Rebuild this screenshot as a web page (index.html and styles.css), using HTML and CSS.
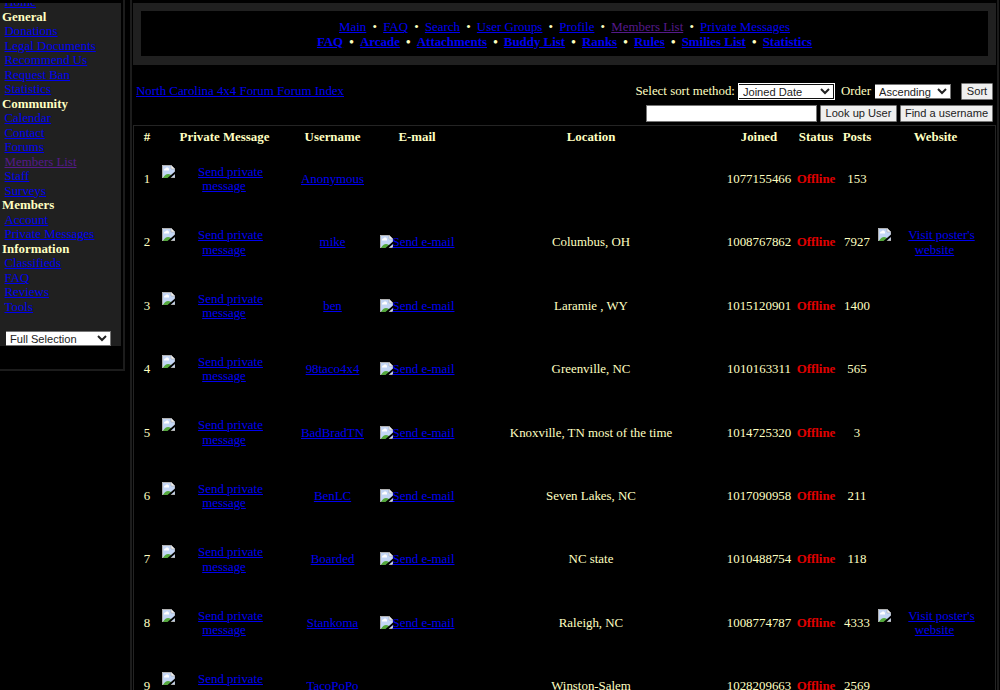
FILE: index.html
```html
<!DOCTYPE html>
<html lang="en">
<head>
    <meta charset="UTF-8">
    <title>North Carolina 4x4 Forum - Members List</title>
    <link rel="stylesheet" href="styles.css">
</head>
<body>
    <svg class="sprite">
        <symbol id="broken" viewBox="0 0 13 13">
            <path d="M0 0h9l4 4v9H0z" fill="#c4d6f5"/>
            <path d="M.5 13V.5H9M0 12.500h13V4" fill="none" stroke="#b0b0b0"/>
            <path d="M9 0v4h4z" fill="#f4f4f4" stroke="#999" stroke-width=".5"/>
            <path d="M2 5.500c0-2 1-2 1.500-2C4 2 7 2 7 4.500v1z" fill="#fff"/>
            <path d="M1 13C3 9 6 8 9 10v3z" fill="#54a83c"/>
            <path d="M5.500 13L13 6.500V9l-4.500 4z" fill="#000"/>
        </symbol>
    </svg>

    <div class="page">
        <div class="sidebar">
            <div class="panel">
                <div class="menu">
                    <a href="#">Home</a>
                    <b>General</b>
                    <a href="#">Donations</a>
                    <a href="#">Legal Documents</a>
                    <a href="#">Recommend Us</a>
                    <a href="#">Request Ban</a>
                    <a href="#">Statistics</a>
                    <b>Community</b>
                    <a href="#">Calendar</a>
                    <a href="#">Contact</a>
                    <a href="#">Forums</a>
                    <a href="#" class="visited">Members List</a>
                    <a href="#">Staff</a>
                    <a href="#">Surveys</a>
                    <b>Members</b>
                    <a href="#">Account</a>
                    <a href="#">Private Messages</a>
                    <b>Information</b>
                    <a href="#">Classifieds</a>
                    <a href="#">FAQ</a>
                    <a href="#">Reviews</a>
                    <a href="#">Tools</a>
                </div>
                <select class="theme-select"><option>Full Selection</option></select>
            </div>
        </div>

        <div class="main">
            <div class="topnav">
                <div class="nav-row">
                    <a href="#">Main</a><i>•</i><a href="#">FAQ</a><i>•</i><a href="#">Search</a><i>•</i><a href="#">User Groups</a><i>•</i><a href="#">Profile</a><i>•</i><a href="#" class="visited">Members List</a><i>•</i><a href="#">Private Messages</a>
                </div>
                <div class="nav-row strong">
                    <a href="#">FAQ</a><i>•</i><a href="#">Arcade</a><i>•</i><a href="#">Attachments</a><i>•</i><a href="#">Buddy List</a><i>•</i><a href="#">Ranks</a><i>•</i><a href="#">Rules</a><i>•</i><a href="#">Smilies List</a><i>•</i><a href="#">Statistics</a>
                </div>
            </div>

            <form class="tools">
                <div class="tools-row">
                    <a href="#" class="crumb">North Carolina 4x4 Forum Forum Index</a>
                    <span class="sort-label">Select sort method:</span>
                    <select class="sort-select"><option>Joined Date</option></select>
                    <span class="order-label">Order</span>
                    <select class="order-select"><option>Ascending</option></select>
                    <button type="button" class="sort-button">Sort</button>
                </div>
                <div class="tools-row search-row">
                    <input type="text" class="user-input">
                    <button type="button" class="lookup-button">Look up User</button>
                    <button type="button" class="find-button">Find a username</button>
                </div>
            </form>

            <table class="members">
                <colgroup>
                    <col class="c-num"><col class="c-pm"><col class="c-user"><col class="c-mail"><col class="c-loc"><col class="c-joined"><col class="c-status"><col class="c-posts"><col class="c-web">
                </colgroup>
                <thead>
                    <tr>
                        <th>#</th><th>Private Message</th><th>Username</th><th>E-mail</th><th>Location</th><th>Joined</th><th>Status</th><th>Posts</th><th>Website</th>
                    </tr>
                </thead>
                <tbody id="memberRows"></tbody>
            </table>
        </div>
    </div>

    <script>
        const members = [
            { name: 'Anonymous', mail: false, location: '', joined: 1077155466, posts: 153 },
            { name: 'mike', mail: true, location: 'Columbus, OH', joined: 1008767862, posts: 7927, web: true },
            { name: 'ben', mail: true, location: 'Laramie , WY', joined: 1015120901, posts: 1400 },
            { name: '98taco4x4', mail: true, location: 'Greenville, NC', joined: 1010163311, posts: 565 },
            { name: 'BadBradTN', mail: true, location: 'Knoxville, TN most of the time', joined: 1014725320, posts: 3 },
            { name: 'BenLC', mail: true, location: 'Seven Lakes, NC', joined: 1017090958, posts: 211 },
            { name: 'Boarded', mail: true, location: 'NC state', joined: 1010488754, posts: 118 },
            { name: 'Stankoma', mail: true, location: 'Raleigh, NC', joined: 1008774787, posts: 4333, web: true },
            { name: 'TacoPoPo', mail: false, location: 'Winston-Salem', joined: 1028209663, posts: 2569 }
        ];

        const icon = '<svg class="broken"><use href="#broken"/></svg>';

        // icon on the left, two centred lines of alt text beside it
        function imageLink(first, second) {
            return `<div class="image-link">${icon}<a href="#">${first}<br><span class="second">${second}</span></a></div>`;
        }

        document.getElementById('memberRows').innerHTML = members.map((m, i) => `
            <tr>
                <td>${i + 1}</td>
                <td>${imageLink('Send private', 'message')}</td>
                <td><a href="#">${m.name}</a></td>
                <td>${m.mail ? `<div class="mail-link">${icon}<a href="#">Send e-mail</a></div>` : ''}</td>
                <td>${m.location}</td>
                <td>${m.joined}</td>
                <td class="offline">Offline</td>
                <td>${m.posts}</td>
                <td class="web">${m.web ? imageLink("Visit poster's", 'website') : ''}</td>
            </tr>
        `).join('');
    </script>
</body>
</html>
```
FILE: styles.css
```css
* {
    box-sizing: border-box;
}

body {
    margin: 0;
    height: 690px;
    overflow: hidden;
    background-color: #000;
    color: #ffffc0;
    font-family: "Liberation Serif", "Times New Roman", serif;
    font-size: 12.900px;
    line-height: 14.500px;
}

a {
    color: #0000f0;
    text-decoration: underline;
}

a.visited {
    color: #551a8b;
}

select, input, button {
    margin: 0;
    font-family: "Liberation Sans", Arial, sans-serif;
    font-size: 11.100px;
    color: #222;
}

select {
    height: 15px;
    padding: 0;
    border: 1px solid #767676;
    border-left-width: 0;
    border-radius: 0;
    background-color: #fff;
}

button {
    height: 17px;
    padding: 0;
    border: 1px solid #767676;
    border-radius: 1px;
    background-color: #efefef;
}

.sprite {
    display: none;
}

.broken {
    display: block;
    flex: none;
    width: 13px;
    height: 13px;
}

.page {
    display: flex;
    align-items: flex-start;
}

/* left menu */
.sidebar {
    width: 125px;
    height: 371px;
    padding-top: 3px;
    border-right: 2px solid #1c1c1c;
    border-bottom: 2px solid #1c1c1c;
}

.panel {
    width: 121px;
    height: 343px;
    overflow: hidden;
    background-color: #202020;
}

.menu {
    display: flex;
    flex-direction: column;
    margin-top: -7.900px;
    padding-left: 2px;
}

.menu a {
    padding-left: 2.500px;
}

.theme-select {
    display: block;
    width: 105px;
    margin: 17px 0 0 6px;
}

/* right column */
.main {
    width: 869px;
    height: 690px;
    margin-left: 5px;
    padding: 3px 1px 0;
    overflow: hidden;
    border-left: 2px solid #1c1c1c;
    border-right: 2px solid #1c1c1c;
}

.topnav {
    height: 62px;
    padding-top: 9px;
    border: 8px solid #202020;
    border-bottom-width: 9px;
    text-align: center;
}

.nav-row i {
    margin: 0 6.200px;
    font-style: normal;
}

.strong {
    font-weight: bold;
}

.tools {
    height: 60px;
    padding: 17px 3px 0;
}

.tools-row {
    display: flex;
    align-items: center;
    height: 18px;
}

.crumb {
    margin-right: auto;
}

.sort-select {
    width: 95px;
    margin: 0 7px 0 4px;
    border-color: #101010;
    outline: 1px solid #fff;
}

.order-select {
    width: 76px;
    margin: 0 10px 0 4px;
}

.sort-button {
    width: 32px;
}

.search-row {
    justify-content: flex-end;
    gap: 3px;
    margin-top: 4px;
}

.user-input {
    width: 171px;
    height: 17px;
    border: 1px solid #767676;
}

.lookup-button {
    width: 77px;
}

.find-button {
    width: 93px;
}

/* member list */
.members {
    width: 863px;
    border: 1px solid #242424;
    border-collapse: separate;
    border-spacing: 0;
    padding: 0 1px;
    table-layout: fixed;
}

.c-num { width: 24px; }
.c-pm { width: 131px; }
.c-user { width: 85px; }
.c-mail { width: 84px; }
.c-loc { width: 264px; }
.c-joined { width: 72px; }
.c-status { width: 42px; }
.c-posts { width: 40px; }

.members th {
    height: 21.500px;
    padding: 0;
}

.members td {
    height: 63.430px;
    padding: 0;
    text-align: center;
}

.members .offline {
    color: #e00000;
    font-weight: bold;
}

.image-link {
    display: flex;
    padding-left: 3px;
}

.image-link a {
    width: 111px;
}

.image-link .second {
    margin-right: 13px;
}

.web .image-link {
    padding-left: 1px;
}

.web .image-link a {
    width: 110px;
    padding-right: 14px;
    padding-left: 12px;
}

.web .image-link .second {
    margin-right: 14px;
}

.mail-link {
    display: flex;
    justify-content: center;
}
```
